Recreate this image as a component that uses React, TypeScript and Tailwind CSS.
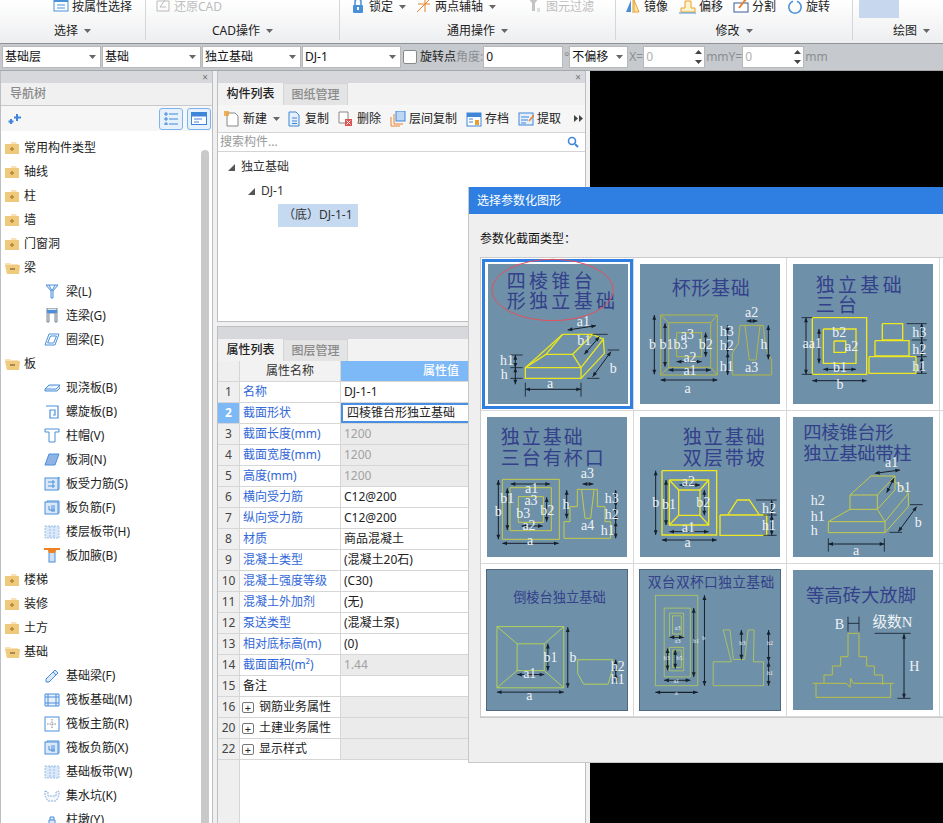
import type { ReactNode } from "react";

const Caret = ({ className = "" }: { className?: string }) => (
  <svg width="7" height="4" viewBox="0 0 7 4" className={`shrink-0 ${className}`}>
    <path d="M0 0h7L3.5 4z" fill="#666" />
  </svg>
);

/* ---------- ribbon ---------- */

const RIBBON_ICONS: Record<string, ReactNode> = {
  attr: (
    <>
      <rect x="1" y="-4" width="14" height="15" fill="#fff" stroke="#4a90d9" />
      <rect x="1" y="-4" width="14" height="6" fill="#4a90d9" />
      <path d="M4 5h8M4 8h8" stroke="#4a90d9" />
    </>
  ),
  cad: (
    <>
      <path d="M2 1h12v10H2z" fill="none" stroke="#bbb" />
      <path d="M5 7l5-7M5 7h6" stroke="#bbb" fill="none" />
    </>
  ),
  lock: (
    <>
      <path d="M5 5V2a3 3 0 016 0v3" fill="none" stroke="#4a90d9" strokeWidth="1.5" />
      <rect x="3" y="5" width="10" height="8" rx="1" fill="#4a90d9" />
      <rect x="7" y="7" width="2" height="3" fill="#fff" />
    </>
  ),
  axis: <path d="M1 12L13 0M2 4h12M9 0v12" stroke="#e8822c" fill="none" />,
  filter: (
    <>
      <path d="M1-2h11L8 3v8H5V3z" fill="#c4c4c4" />
      <path d="M10 9h3M10 11h3" stroke="#c4c4c4" />
    </>
  ),
  mirror: (
    <>
      <path d="M1 12L6 0v12z" fill="#4a90d9" />
      <path d="M8-1v14" stroke="#e8a030" />
      <path d="M9 0l5 12H9z" fill="#ffe9a8" stroke="#e8a030" />
    </>
  ),
  offset: (
    <>
      <path d="M1 12V8h4V1h6v7h4v4z" fill="#fff3cc" stroke="#e8a030" />
      <path d="M-1 13h17" stroke="#4a90d9" />
    </>
  ),
  split: (
    <>
      <rect x="1" y="3" width="14" height="9" fill="#fff" stroke="#3a5a9a" />
      <path d="M13-1L6 8" stroke="#e8822c" strokeWidth="2" />
    </>
  ),
  rotate: <path d="M10 1.2A6.2 6.2 0 116 1.2" fill="none" stroke="#4a90d9" strokeWidth="1.6" />,
};

const RibbonIcon = ({ name }: { name: string }) => (
  <svg width="16" height="13" viewBox="0 0 16 13" className="shrink-0 overflow-visible">
    {RIBBON_ICONS[name]}
  </svg>
);

function RibbonItem({ icon, text, caret, muted, className = "" }: { icon: string; text: string; caret?: boolean; muted?: boolean; className?: string }) {
  return (
    <div className={`flex items-center gap-[3px] ${muted ? "text-[#bdbdbd]" : "text-[#222]"} ${className}`}>
      <RibbonIcon name={icon} />
      <span>{text}</span>
      {caret && <Caret className="ml-[3px]" />}
    </div>
  );
}

function RibbonGroup({ width, label, pad, children }: { width: string; label: string; pad: string; children?: ReactNode }) {
  return (
    <div className={`flex h-[40px] shrink-0 flex-col border-r border-r-[#d4d6d8] ${width}`}>
      <div className={`flex h-[13px] items-center overflow-visible ${pad}`}>{children}</div>
      <div className="mt-[10px] flex h-[16px] items-center justify-center gap-[6px] text-[#222]">
        <span>{label}</span>
        <Caret />
      </div>
    </div>
  );
}

function Ribbon() {
  return (
    <div className="flex h-[43px] shrink-0 overflow-hidden bg-gradient-to-b from-white to-[#edeef0]">
      <RibbonGroup width="w-[146px]" label="选择" pad="pl-[53px]">
        <RibbonItem icon="attr" text="按属性选择" />
      </RibbonGroup>
      <RibbonGroup width="w-[194px]" label="CAD操作" pad="pl-[9px]">
        <RibbonItem icon="cad" text="还原CAD" muted />
      </RibbonGroup>
      <RibbonGroup width="w-[276px]" label="通用操作" pad="pl-[10px]">
        <RibbonItem icon="lock" text="锁定" caret />
        <RibbonItem icon="axis" text="两点辅轴" caret className="ml-[10px]" />
        <RibbonItem icon="filter" text="图元过滤" muted className="ml-[31px]" />
      </RibbonGroup>
      <RibbonGroup width="w-[237px]" label="修改" pad="pl-[9px]">
        <RibbonItem icon="mirror" text="镜像" />
        <RibbonItem icon="offset" text="偏移" className="ml-[12px]" />
        <RibbonItem icon="split" text="分割" className="ml-[10px]" />
        <RibbonItem icon="rotate" text="旋转" className="ml-[11px]" />
      </RibbonGroup>
      <div className="flex h-[40px] flex-1 flex-col">
        <div className="ml-[6px] h-[18px] w-[40px] bg-[#c6d7ee]" />
        <div className="mt-[5px] flex h-[16px] items-center gap-[6px] pl-[40px] text-[#222]">
          <span>绘图</span>
          <Caret />
        </div>
      </div>
    </div>
  );
}

/* ---------- selector bar ---------- */

function Select({ text, width }: { text: string; width: string }) {
  return (
    <div className={`flex h-[22px] shrink-0 items-center justify-between border border-[#b8b8b8] bg-white pl-[2px] pr-[4px] text-[#111] ${width}`}>
      <span>{text}</span>
      <Caret />
    </div>
  );
}

function Spin({ width }: { width: string }) {
  return (
    <div className={`flex h-[22px] shrink-0 items-center justify-between border border-[#b8b8b8] bg-white pl-[2px] pr-[2px] text-[#b0b0b0] ${width}`}>
      <span>0</span>
      <svg width="7" height="14" viewBox="0 0 7 14">
        <path d="M0 4l3.5-4L7 4zM0 10l3.5 4L7 10z" fill="#444" />
      </svg>
    </div>
  );
}

function SelectorBar() {
  return (
    <div className="flex h-[28px] shrink-0 items-center border-t border-b border-t-[#8f9296] border-b-[#a7a9ac] bg-[#c6c9cd] pl-[2px]">
      <Select text="基础层" width="w-[99px]" />
      <Select text="基础" width="w-[99px] ml-[1px]" />
      <Select text="独立基础" width="w-[99px] ml-[1px]" />
      <Select text="DJ-1" width="w-[99px] ml-[1px]" />
      <span className="ml-[2px] h-[14px] w-[14px] rounded-[2px] border border-[#8a8a8a] bg-white" />
      <span className="ml-[3px] text-[#222]">旋转点</span>
      <span className="text-[#8b8e92]">角度:</span>
      <div className="flex h-[22px] w-[80px] shrink-0 items-center border border-[#b8b8b8] bg-white pl-[2px] text-[#111]">0</div>
      <span className="ml-[1px] w-[5px] text-[#8b8e92]">°</span>
      <Select text="不偏移" width="w-[59px]" />
      <span className="ml-[1px] text-[#8b8e92]">X=</span>
      <Spin width="w-[62px]" />
      <span className="ml-[1px] text-[#8b8e92]">mmY=</span>
      <Spin width="w-[62px]" />
      <span className="ml-[1px] text-[#8b8e92]">mm</span>
    </div>
  );
}

/* ---------- nav tree ---------- */

const Folder = ({ open }: { open?: boolean }) =>
  open ? (
    <svg width="17" height="12" viewBox="0 0 17 12" className="shrink-0">
      <path d="M0 3V1h5l1 1h7v2z" fill="#f6e2b6" />
      <path d="M0 3h15l-1 9H2z" fill="#f0cb7e" />
      <path d="M5 7h5" stroke="#a88a50" strokeWidth="2" />
    </svg>
  ) : (
    <svg width="14" height="12" viewBox="0 0 14 12" className="shrink-0">
      <path d="M6 0h5l1 2H6z" fill="#f6e2b6" />
      <rect y="2" width="14" height="10" fill="#efc97c" />
      <path d="M5 7h4M7 5v4" stroke="#b8893a" strokeWidth="1.6" />
    </svg>
  );

const B = "#4a8fdc";
const TREE_ICONS: Record<string, ReactNode> = {
  beam: <path d="M2 1h12l-5 6v7H7V7zM5 1l3 6 3-6" fill="#e4eefa" stroke={B} />,
  link: (
    <>
      <path d="M3 0h10v14h-2V5H5v9H3z" fill="#dde3ea" stroke="#7b8694" />
      <rect x="3" y="2" width="10" height="3" fill={B} />
    </>
  ),
  ring: <path d="M5 2h10l-4 11H1zM6.5 4h6l-2.8 7H3.6z" fill="none" stroke={B} />,
  slab: <path d="M1 9l4-4h11v3l-3 3H1zM1 9h11l4-4" fill="#dbe8f8" stroke={B} />,
  spiral: <path d="M2 2h12v12H6V6h5v5H9" fill="none" stroke={B} strokeWidth="1.2" />,
  cap: <path d="M1 1h14v3h-4v10H5V4H1z" fill="#fff" stroke={B} />,
  hole: <path d="M5 2h10l-4 11H1z" fill="#8fb4e4" stroke={B} />,
  rebar: (
    <>
      <rect x="1" y="2" width="13" height="12" fill="#dbe8f8" stroke={B} />
      <path d="M14 2l1-1v12l-1 1M4 6h7M4 10h7M9 4v8" fill="none" stroke={B} />
    </>
  ),
  neg: (
    <>
      <rect x="1" y="2" width="13" height="12" fill="#dbe8f8" stroke={B} />
      <path d="M3 2V1h12v12h-1M5 6v4h6M8 5v7M10 5v7" fill="none" stroke={B} />
    </>
  ),
  strip: <path d="M1 2h14v12H1zM6 2v12M10 2v12" fill="#dbe8f8" stroke="#9cc0ea" strokeDasharray="2 1" />,
  haunch: (
    <>
      <rect x="5" y="2" width="6" height="12" fill="#cfe0f6" stroke={B} />
      <path d="M0 0h16v2h-4l-1 3H5L4 2H0z" fill="#f08020" />
    </>
  ),
  pencil: <path d="M2 11L11 2l3 3-9 9H2zM9 4l3 3" fill="#dbe8f8" stroke={B} />,
  raft: <path d="M1 2h14v12H1zM4 2v12M12 2v12M1 5h14M1 11h14" fill="#e8f0fa" stroke={B} />,
  main: (
    <>
      <rect x="1" y="1" width="14" height="14" fill="#fff" stroke={B} />
      <path d="M8 3v10M3 8h10" stroke="#888" strokeDasharray="1.5 1" />
    </>
  ),
  pit: <path d="M1 3l3 1v4h8V4l3-1v5l-3 5H4L1 8z" fill="#f4f7fb" stroke="#8aaedc" strokeDasharray="2 1" />,
  pier: <path d="M1 12h14v4H1zM5 12V8h6v4M6 8V5h4v3" fill="#dbe8f8" stroke={B} />,
};

const TREE: [string, string | null][] = [
  ["常用构件类型", null], ["轴线", null], ["柱", null], ["墙", null], ["门窗洞", null], ["梁", "open"],
  ["梁(L)", "beam"], ["连梁(G)", "link"], ["圈梁(E)", "ring"], ["板", "open"],
  ["现浇板(B)", "slab"], ["螺旋板(B)", "spiral"], ["柱帽(V)", "cap"], ["板洞(N)", "hole"],
  ["板受力筋(S)", "rebar"], ["板负筋(F)", "neg"], ["楼层板带(H)", "strip"], ["板加腋(B)", "haunch"],
  ["楼梯", null], ["装修", null], ["土方", null], ["基础", "open"],
  ["基础梁(F)", "pencil"], ["筏板基础(M)", "raft"], ["筏板主筋(R)", "main"], ["筏板负筋(X)", "neg"],
  ["基础板带(W)", "strip"], ["集水坑(K)", "pit"], ["柱墩(Y)", "pier"],
];

function NavTree() {
  return (
    <div className="flex w-[213px] shrink-0 flex-col overflow-hidden border-x border-x-[#bcbec2] bg-white">
      <div className="flex h-[12px] shrink-0 items-center justify-end bg-[#d6d8dc] pr-[4px] text-[10px] leading-none text-[#777]">×</div>
      <div className="flex h-[23px] shrink-0 items-center border-b border-b-[#c6c8cc] bg-[#f0f0f0] pl-[9px] font-medium text-[#8a8a8a]">导航树</div>
      <div className="flex h-[25px] shrink-0 items-center bg-[#f6f6f6] pl-[7px] pr-[1px]">
        <svg width="14" height="12" viewBox="0 0 14 12">
          <path d="M9 1v7M6 4.500h7M3 6v5M.5 8.500h5" stroke="#3f86d8" strokeWidth="2" />
        </svg>
        <div className="ml-auto flex gap-[4px]">
          <span className="flex h-[22px] w-[24px] items-center justify-center rounded-[3px] border border-[#7db4ee] bg-[#e6f1fc]">
            <svg width="14" height="13" viewBox="0 0 14 13">
              <path d="M1 1h2v2H1zM1 6h2v2H1zM1 11h2v2H1zM5 2h9M5 7h9M5 12h9" stroke="#3f86d8" fill="none" />
            </svg>
          </span>
          <span className="flex h-[22px] w-[24px] items-center justify-center rounded-[3px] border border-[#7db4ee] bg-[#e6f1fc]">
            <svg width="16" height="13" viewBox="0 0 16 13">
              <rect x=".5" y=".5" width="15" height="12" fill="#fff" stroke="#3f86d8" />
              <rect x=".5" y=".5" width="15" height="4" fill="#3f86d8" />
              <path d="M3 7h8M3 10h5" stroke="#3f86d8" />
            </svg>
          </span>
        </div>
      </div>
      <div className="flex min-h-0 flex-1">
        <div className="min-w-0 flex-1 overflow-hidden pt-[5px]">
          {TREE.map(([label, kind]) => {
            const isGroup = kind === null || kind === "open";
            return (
              <div key={label} className={`flex h-[24px] items-center text-[#222] ${isGroup ? "pl-[3px]" : "pl-[43px]"}`}>
                {isGroup ? (
                  <span className="flex w-[20px] items-center pl-[1px]">
                    <Folder open={kind === "open"} />
                  </span>
                ) : (
                  <svg width="16" height="16" viewBox="0 0 16 16" className="mr-[6px] shrink-0">
                    {TREE_ICONS[kind as string]}
                  </svg>
                )}
                {label}
              </div>
            );
          })}
        </div>
        <div className="mr-[3px] mt-[19px] w-[8px] shrink-0 rounded-t-[4px] bg-[#c9c9c9]" />
      </div>
    </div>
  );
}

/* ---------- component list + property table ---------- */

function PaneTabs({ active, other }: { active: string; other: string }) {
  return (
    <div className="flex h-[22px] shrink-0 bg-[#f2f2f2]">
      <div className="flex w-[65px] items-center justify-center font-medium text-[#222]">{active}</div>
      <div className="flex w-[65px] items-center justify-center border-x border-t border-[#d4d4d4] bg-[#e4e4e4] font-medium text-[#8a8a8a]">{other}</div>
    </div>
  );
}

const TOOL_ICONS: Record<string, ReactNode> = {
  new: (
    <>
      <path d="M3 2h8l3 3v10H3z" fill="#fff" stroke="#888" />
      <path d="M0 0h5v5H0z" fill="#f0a030" opacity=".8" />
    </>
  ),
  copy: <path d="M3 1h7l3 3v11H3zM6 7h5M6 10h5M6 12.500h5" fill="#e6f0fb" stroke="#3f86d8" />,
  del: (
    <>
      <path d="M1 1h9v11H1z" fill="#fff" stroke="#888" />
      <rect x="7" y="8" width="7" height="7" fill="#e05050" />
      <path d="M8.500 9.500l4 4m0-4l-4 4" stroke="#fff" />
    </>
  ),
  floor: (
    <>
      <rect x="6" y="0" width="9" height="10" fill="#bcd6f4" stroke="#3f86d8" />
      <path d="M4 3v10h9M1 6v9h9" fill="none" stroke="#e8822c" />
    </>
  ),
  save: (
    <>
      <rect x="1" y="2" width="14" height="13" fill="#fff" stroke="#3f86d8" />
      <rect x="1" y="2" width="14" height="4" fill="#3f86d8" />
      <rect x="9" y="9" width="4" height="5" fill="#e8a030" />
      <path d="M3 8h4M3 11h4" stroke="#3f86d8" />
    </>
  ),
  extract: (
    <>
      <rect x="1" y="2" width="14" height="12" fill="#e6f0fb" stroke="#3f86d8" />
      <path d="M3 6h8M3 9h7M3 12h5" stroke="#3f86d8" />
      <path d="M11 10l5-6" stroke="#e8822c" strokeWidth="1.500" />
    </>
  ),
};

function Tool({ icon, text, caret, className = "" }: { icon: string; text: string; caret?: boolean; className?: string }) {
  return (
    <div className={`flex shrink-0 items-center gap-[3px] text-[#222] ${className}`}>
      <svg width="16" height="16" viewBox="0 0 16 16" className="shrink-0">{TOOL_ICONS[icon]}</svg>
      <span>{text}</span>
      {caret && <Caret className="ml-[3px]" />}
    </div>
  );
}

function ComponentList() {
  return (
    <div className="flex h-[251px] shrink-0 flex-col border-x border-b border-[#bcbec2] bg-white">
      <div className="flex h-[12px] shrink-0 items-center justify-end bg-[#d6d8dc] pr-[4px] text-[10px] leading-none text-[#777]">×</div>
      <PaneTabs active="构件列表" other="图纸管理" />
      <div className="flex h-[27px] shrink-0 items-center bg-[#f6f6f6] pl-[6px]">
        <Tool icon="new" text="新建" caret />
        <Tool icon="copy" text="复制" className="ml-[6px]" />
        <Tool icon="del" text="删除" className="ml-[9px]" />
        <Tool icon="floor" text="层间复制" className="ml-[9px]" />
        <Tool icon="save" text="存档" className="ml-[9px]" />
        <Tool icon="extract" text="提取" className="ml-[9px]" />
        <span className="ml-[13px] flex items-center">
          <svg width="9" height="7" viewBox="0 0 9 7"><path d="M0 0l4 3.500L0 7zM5 0l4 3.500L5 7z" fill="#444" /></svg>
        </span>
      </div>
      <div className="flex h-[20px] shrink-0 items-center justify-between border-y border-y-[#d4d4d4] pl-[2px] pr-[6px] text-[#999]">
        <span>搜索构件...</span>
        <svg width="12" height="12" viewBox="0 0 12 12">
          <circle cx="5" cy="5" r="3.500" fill="none" stroke="#3f86d8" strokeWidth="1.600" />
          <path d="M8 8l3 3" stroke="#3f86d8" strokeWidth="2" />
        </svg>
      </div>
      <div className="flex-1 pt-[3px] text-[#333]">
        <div className="flex h-[24px] items-center pl-[10px]">
          <svg width="7" height="7" viewBox="0 0 7 7" className="mr-[6px]"><path d="M7 0v7H0z" fill="#555" /></svg>
          独立基础
        </div>
        <div className="flex h-[24px] items-center pl-[30px]">
          <svg width="7" height="7" viewBox="0 0 7 7" className="mr-[6px]"><path d="M7 0v7H0z" fill="#555" /></svg>
          DJ-1
        </div>
        <div className="flex h-[24px] items-center pl-[60px]">
          <span className="flex h-[23px] items-center bg-[#c5d9f1] px-[5px]">（底）DJ-1-1</span>
        </div>
      </div>
    </div>
  );
}

type Row = { n: number; name: string; value?: string; kind?: "grey" | "plain" | "group" | "active" };

const ROWS: Row[] = [
  { n: 1, name: "名称", value: "DJ-1-1" },
  { n: 2, name: "截面形状", value: "四棱锥台形独立基础", kind: "active" },
  { n: 3, name: "截面长度(mm)", value: "1200", kind: "grey" },
  { n: 4, name: "截面宽度(mm)", value: "1200", kind: "grey" },
  { n: 5, name: "高度(mm)", value: "1200", kind: "grey" },
  { n: 6, name: "横向受力筋", value: "C12@200" },
  { n: 7, name: "纵向受力筋", value: "C12@200" },
  { n: 8, name: "材质", value: "商品混凝土" },
  { n: 9, name: "混凝土类型", value: "(混凝土20石)" },
  { n: 10, name: "混凝土强度等级", value: "(C30)" },
  { n: 11, name: "混凝土外加剂", value: "(无)" },
  { n: 12, name: "泵送类型", value: "(混凝土泵)" },
  { n: 13, name: "相对底标高(m)", value: "(0)" },
  { n: 14, name: "截面面积(m²)", value: "1.44", kind: "grey" },
  { n: 15, name: "备注", kind: "plain" },
  { n: 16, name: "钢筋业务属性", kind: "group" },
  { n: 20, name: "土建业务属性", kind: "group" },
  { n: 22, name: "显示样式", kind: "group" },
];

function PropertyRow({ row }: { row: Row }) {
  const { n, name, value, kind } = row;
  const greyValue = kind === "grey" || kind === "group";
  return (
    <div className="flex h-[21px] border-b border-b-[#d6d6d6]">
      <div className={`flex w-[22px] shrink-0 items-center justify-center border-r border-r-[#d6d6d6] ${kind === "active" ? "bg-[#7db8f7] font-bold text-white" : "bg-[#efefef] text-[#444]"}`}>{n}</div>
      <div className={`flex w-[101px] shrink-0 items-center border-r border-r-[#d6d6d6] ${kind === "group" ? "pl-[2px] text-[#222]" : kind === "plain" ? "pl-[3px] text-[#222]" : "pl-[3px] text-[#3167d8]"}`}>
        {kind === "group" && (
          <span className="mr-[5px] flex h-[11px] w-[12px] items-center justify-center rounded-[2px] border border-[#777] text-[11px] leading-none">+</span>
        )}
        {name}
      </div>
      <div className={`flex min-w-0 flex-1 items-center ${greyValue ? "bg-[#ebebeb]" : "bg-white"} ${kind === "active" ? "border-y-2 border-l-2 border-[#4a90e2] pl-[4px]" : "pl-[3px]"} ${kind === "grey" ? "text-[#a2a2a2]" : "text-[#222]"}`}>
        {value}
      </div>
    </div>
  );
}

function PropertyList() {
  return (
    <div className="mt-[4px] flex min-h-0 flex-1 flex-col border-x border-t border-[#bcbec2] bg-white">
      <div className="h-[12px] shrink-0 bg-[#d6d8dc]" />
      <PaneTabs active="属性列表" other="图层管理" />
      <div className="flex h-[21px] shrink-0 border-b border-b-[#d6d6d6]">
        <div className="w-[22px] shrink-0 border-r border-r-[#d6d6d6] bg-[#efefef]" />
        <div className="flex w-[101px] shrink-0 items-center justify-center border-r border-r-[#d6d6d6] bg-[#f2f2f2] text-[#333]">属性名称</div>
        <div className="flex flex-1 items-center bg-[#7db8f7] pl-[82px] font-medium text-white">属性值</div>
      </div>
      {ROWS.map((row) => (
        <PropertyRow key={row.n} row={row} />
      ))}
      <div className="w-[22px] flex-1 border-r border-r-[#d6d6d6] bg-[#efefef]" />
    </div>
  );
}

/* ---------- parametric shape pictures (drawn in 3x coordinates of the 140px tile) ---------- */

type Diagram = {
  box: string;
  color: string;
  sw: number;
  framed?: boolean;
  titles: [string, number, number][];
  titleSize: number;
  spacing: number;
  polys: string[];
  dims: number[][];
  ticks?: number[][];
  labels: [string, number, number, number?][];
  extra?: ReactNode;
};

function Dim({ d, size = 14 }: { d: number[]; size?: number }) {
  const [x1, y1, x2, y2] = d;
  const len = Math.hypot(x2 - x1, y2 - y1) || 1;
  const ux = (x2 - x1) / len;
  const uy = (y2 - y1) / len;
  const hx = -uy * (size / 2.4);
  const hy = ux * (size / 2.4);
  return (
    <g>
      <line x1={x1} y1={y1} x2={x2} y2={y2} stroke="#16202c" strokeWidth="3" />
      <polygon fill="#16202c" points={`${x1},${y1} ${x1 + ux * size + hx},${y1 + uy * size + hy} ${x1 + ux * size - hx},${y1 + uy * size - hy}`} />
      <polygon fill="#16202c" points={`${x2},${y2} ${x2 - ux * size + hx},${y2 - uy * size + hy} ${x2 - ux * size - hx},${y2 - uy * size - hy}`} />
    </g>
  );
}

const DIAGRAMS: Diagram[] = [
  {
    box: "51 252 420 420", color: "#e8e620", sw: 4, titleSize: 57, spacing: 10,
    titles: [["四棱锥台", 107, 325], ["形独立基础", 107, 385]],
    polys: [
      "163,563 330,563 330,595 163,595 163,563",
      "275,463 365,463 305,523 225,523 275,463",
      "163,563 225,523", "163,563 275,463", "330,563 305,523",
      "330,595 400,520 397,478 330,563", "365,463 397,478",
    ],
    dims: [[163, 628, 330, 628], [133, 525, 133, 563], [133, 563, 133, 613], [290, 450, 375, 437], [385, 470, 340, 523], [420, 515, 365, 590]],
    ticks: [[163, 608, 163, 650], [330, 608, 330, 650], [118, 525, 155, 525], [118, 563, 155, 563], [118, 595, 155, 595], [365, 463, 410, 463], [410, 510, 445, 510], [348, 595, 385, 595]],
    labels: [["a", 237, 610], ["h1", 108, 540], ["h", 100, 582], ["a1", 337, 423], ["b1", 340, 482], ["b", 427, 565]],
    extra: <ellipse cx="245" cy="330" rx="182" ry="92" fill="none" stroke="#e6505a" strokeWidth="3" />,
  },
  {
    box: "510 252 420 420", color: "#b4b845", sw: 3, titleSize: 57, spacing: 2,
    titles: [["杯形基础", 605, 345]],
    polys: [
      "572,405 742,405 742,585 572,585 572,405", "596,428 722,428 722,562 596,562 596,428",
      "620,458 695,458 695,530 620,530 620,458", "572,405 596,428", "742,405 722,428", "572,585 596,562", "742,585 722,562",
      "810,436 880,436 887,505 905,540 905,585 787,585 787,520 805,490 810,436", "825,438 838,540 858,540 870,438",
    ],
    dims: [[553, 405, 553, 583], [585, 430, 585, 560], [707, 458, 707, 530], [620, 545, 695, 545], [596, 570, 722, 570], [572, 600, 742, 600], [773, 436, 773, 518], [773, 518, 773, 585], [895, 436, 895, 538], [830, 423, 862, 423]],
    labels: [["b b1b3", 595, 492], ["a3", 652, 462], ["b2", 707, 492], ["a2", 660, 532], ["a1", 660, 572], ["a", 653, 625], ["a2", 845, 398], ["h3", 770, 455], ["h2", 770, 497], ["h1", 770, 558], ["h", 882, 492], ["a3", 845, 562]],
  },
  {
    box: "969 252 420 420", color: "#efe820", sw: 4, titleSize: 57, spacing: 10,
    titles: [["独立基础", 1037, 335], ["三台", 1037, 395]],
    polys: [
      "1027,413 1190,413 1190,583 1027,583 1027,413", "1060,447 1158,447 1158,550 1060,550 1060,447", "1092,483 1127,483 1127,517 1092,517 1092,483",
      "1197,530 1338,530 1338,580 1197,580 1197,530", "1215,482 1317,482 1317,528 1215,528 1215,482", "1237,431 1298,431 1298,480 1237,480 1237,431",
    ],
    dims: [[1008, 413, 1008, 583], [1047, 447, 1047, 550], [1060, 568, 1158, 568], [1027, 602, 1190, 602], [1355, 430, 1355, 480], [1355, 480, 1355, 530], [1355, 530, 1355, 580]],
    ticks: [[995, 413, 1027, 413], [995, 583, 1027, 583], [1310, 431, 1370, 431], [1325, 480, 1370, 480], [1340, 530, 1370, 530], [1340, 580, 1370, 580]],
    labels: [["aa1", 1027, 490], ["b2", 1108, 458], ["a2", 1145, 498], ["b1", 1110, 562], ["b", 1110, 612], ["h3", 1348, 458], ["h2", 1348, 508], ["h1", 1348, 560]],
  },
  {
    box: "51 21 420 420", color: "#c4cc48", sw: 3, titleSize: 57, spacing: 6,
    titles: [["独立基础", 92, 102], ["三台有杯口", 92, 165]],
    polys: [
      "97,208 268,208 268,388 97,388 97,208", "120,233 244,233 244,362 120,362 120,233", "145,260 220,260 220,337 145,337 145,260",
      "322,238 382,238 382,290 405,290 405,335 422,335 422,385 282,385 282,335 300,335 300,290 322,290 322,238", "335,240 345,325 362,325 372,240",
    ],
    dims: [[85, 210, 85, 388], [112, 235, 112, 360], [230, 262, 230, 335], [122, 222, 240, 222], [155, 348, 218, 348], [97, 400, 266, 400], [290, 240, 290, 325], [338, 222, 370, 222], [437, 240, 437, 290], [437, 290, 437, 335], [437, 335, 437, 385]],
    labels: [["a1", 185, 235], ["b1", 112, 265], ["a3", 183, 272], ["b3", 160, 309], ["b2", 232, 302], ["a2", 177, 345], ["b", 85, 303], ["a", 180, 390], ["a3", 352, 190], ["h", 288, 284], ["h3", 425, 265], ["h2", 425, 312], ["h1", 413, 362], ["a4", 353, 345]],
  },
  {
    box: "510 21 420 420", color: "#efe820", sw: 4, titleSize: 57, spacing: 6,
    titles: [["独立基础", 638, 102], ["双层带坡", 638, 165]],
    polys: [
      "576,182 740,182 740,375 576,375 576,182", "598,210 716,210 716,345 598,345 598,210", "626,240 690,240 690,316 626,316 626,240",
      "598,210 626,240", "716,210 690,240", "598,345 626,316", "716,345 690,316",
      "750,315 890,315 890,376 750,376 750,315", "773,315 802,270 838,270 868,315",
    ],
    dims: [[557, 182, 557, 375], [588, 210, 588, 345], [703, 240, 703, 316], [628, 225, 690, 225], [598, 365, 716, 365], [576, 390, 740, 390], [905, 270, 905, 315], [905, 315, 905, 376]],
    ticks: [[858, 270, 920, 270], [880, 315, 920, 315], [880, 376, 920, 376]],
    labels: [["a2", 655, 215], ["b", 557, 277], ["b1", 597, 284], ["b2", 700, 277], ["a1", 655, 352], ["a", 653, 397], ["h2", 897, 295], ["h1", 897, 346]],
  },
  {
    box: "969 21 420 420", color: "#c4cc48", sw: 3, titleSize: 55, spacing: -1,
    titles: [["四棱锥台形", 1000, 88], ["独立基础带柱", 1000, 150]],
    polys: [
      "1075,335 1245,335 1245,368 1075,368 1075,335", "1140,255 1222,255 1222,298 1140,298 1140,255",
      "1140,255 1203,198 1275,198 1222,255", "1275,198 1275,240 1222,298", "1245,335 1315,250 1315,290 1245,368", "1222,298 1245,335", "1140,298 1075,335", "1275,215 1315,250",
    ],
    dims: [[1215, 190, 1290, 180], [1272, 205, 1250, 248], [1340, 290, 1285, 365], [1075, 402, 1243, 402]],
    ticks: [[1075, 385, 1075, 425], [1243, 385, 1243, 425], [1320, 284, 1358, 284], [1258, 367, 1296, 367]],
    labels: [["a1", 1265, 158], ["b1", 1302, 232], ["h2", 1043, 272], ["h1", 1043, 319], ["h", 1033, 362], ["b", 1345, 337], ["a", 1158, 422]],
  },
  {
    box: "48 477 423 423", color: "#bfdf48", sw: 2.500, framed: true, titleSize: 40, spacing: 0,
    titles: [["倒棱台独立基础", 127, 575]],
    polys: [
      "78,648 280,648 280,833 78,833 78,648", "139,700 221,700 221,781 139,781 139,700", "78,648 139,700", "280,648 221,700", "78,833 139,781", "280,833 221,781",
      "322,748 428,748 428,775 414,822 340,822 322,790 322,748",
    ],
    dims: [[292, 650, 292, 833], [232, 700, 232, 781], [139, 793, 221, 793], [78, 846, 280, 846], [437, 748, 437, 790], [437, 790, 437, 822]],
    labels: [["b1", 240, 742], ["b", 308, 742], ["a1", 177, 790], ["a", 176, 857], ["h2", 443, 770], ["h1", 443, 807]],
  },
  {
    box: "510 483 417 414", color: "#c4d848", sw: 2, framed: true, titleSize: 41, spacing: 1,
    titles: [["双台双杯口独立基础", 533, 533]],
    polys: [
      "556,557 682,557 682,826 556,826 556,557", "582,595 660,595 660,800 582,800 582,595", "598,610 640,610 640,680 598,680 598,610", "607,618 633,618 633,672 607,672 607,618",
      "598,712 640,712 640,782 598,782 598,712", "607,720 633,720 633,772 607,772 607,720",
      "728,826 728,755 782,755 758,660 778,660 788,748 822,748 832,660 850,660 848,755 878,755 878,826 728,826",
    ],
    dims: [[702, 557, 702, 826], [670, 595, 670, 800], [556, 846, 682, 846], [598, 682, 640, 682], [592, 715, 592, 780], [615, 720, 615, 775], [582, 810, 660, 810], [812, 660, 812, 748], [893, 660, 893, 755], [893, 755, 893, 826]],
    labels: [["a3", 622, 655, 18], ["a3", 622, 693, 18], ["b1", 677, 692, 18], ["b", 700, 685, 18], ["b3", 590, 745, 18], ["b5", 628, 745, 18], ["a1", 618, 813, 18], ["a", 618, 848, 18], ["h3", 815, 700, 18], ["h2", 897, 700, 18], ["h1", 897, 788, 18]],
  },
  {
    box: "969 480 420 420", color: "#b8c045", sw: 3, titleSize: 55, spacing: 0,
    titles: [["等高砖大放脚", 1008, 575]],
    polys: [
      "1038,820 1038,862 1262,862 1262,820",
      "1062,820 1062,795 1087,795 1087,768 1112,768 1112,740 1134,740 1134,670 1167,670 1167,740 1190,740 1190,768 1213,768 1213,795 1238,795 1238,825",
      "1028,820 1130,820 1140,832 1142,805 1150,820 1272,820",
    ],
    dims: [[1302, 672, 1302, 865]],
    ticks: [[1134, 620, 1134, 665], [1167, 620, 1167, 665], [1214, 670, 1322, 670], [1282, 865, 1322, 865], [1134, 640, 1167, 640]],
    labels: [["B", 1108, 642], ["级数N", 1267, 636, 44], ["H", 1333, 768]],
  },
];

function ShapeTile({ d }: { d: Diagram }) {
  return (
    <svg viewBox={d.box} className={`h-[140px] w-[140px] overflow-visible bg-[#6f90a9] ${d.framed ? "outline-1 outline-[#4f6a80]" : ""}`}>
      {d.titles.map(([text, x, y]) => (
        <text key={text} x={x} y={y} fontSize={d.titleSize} letterSpacing={d.spacing} fill="#33408a" className="font-['Noto_Sans_CJK_SC',sans-serif]">
          {text}
        </text>
      ))}
      {d.polys.map((points) => (
        <polyline key={points} points={points} fill="none" stroke={d.color} strokeWidth={d.sw} />
      ))}
      {d.ticks?.map((t) => (
        <line key={t.join()} x1={t[0]} y1={t[1]} x2={t[2]} y2={t[3]} stroke="#16202c" strokeWidth="2.500" />
      ))}
      {d.dims.map((t) => (
        <Dim key={t.join()} d={t} />
      ))}
      {d.labels.map(([text, x, y, size]) => (
        <text key={`${text}${x}`} x={x} y={y} fontSize={size ?? 42} textAnchor="middle" dominantBaseline="central" fill="#eef3f6" className="font-['Liberation_Serif','Noto_Sans_CJK_SC',serif]">
          {text}
        </text>
      ))}
      {d.extra}
    </svg>
  );
}

function ShapeDialog() {
  return (
    <div className="absolute left-[468px] top-[187px] flex h-[576px] w-[475px] flex-col border-b border-l border-[#c8c8c8] bg-[#efefef]">
      <div className="flex h-[27px] shrink-0 items-center bg-[#2e7fe1] pl-[8px] text-white">选择参数化图形</div>
      <div className="mt-[17px] h-[16px] pl-[11px] leading-[16px] text-[#111]">参数化截面类型：</div>
      <div className="ml-[11px] mt-[10px] grid h-[461px] w-[470px] grid-cols-[153px_153px_153px_1fr] border border-[#cbcbcb] bg-white">
        {DIAGRAMS.flatMap((d, i) => {
          const cell = (
            <div key={d.box} className="flex h-[153px] items-center justify-center border-b border-r border-[#d8d8d8]">
              {i === 0 ? (
                <div className="ml-[1px] flex h-[150px] w-[151px] items-center justify-center border-[3px] border-[#2e7fe1]">
                  <ShapeTile d={d} />
                </div>
              ) : (
                <ShapeTile d={d} />
              )}
            </div>
          );
          return i % 3 === 2 ? [cell, <div key={`${d.box}-rest`} className="h-[153px] border-b border-[#d8d8d8]" />] : [cell];
        })}
      </div>
    </div>
  );
}

export default function App() {
  return (
    <div className="relative flex h-[823px] w-[943px] flex-col overflow-hidden bg-[#f0f0f0] font-['Noto_Sans','Noto_Sans_CJK_SC',sans-serif] text-[12px] leading-none">
      <Ribbon />
      <SelectorBar />
      <div className="flex min-h-0 flex-1">
        <NavTree />
        <div className="ml-[4px] flex w-[369px] shrink-0 flex-col">
          <ComponentList />
          <PropertyList />
        </div>
        <div className="ml-[4px] flex-1 bg-black" />
      </div>
      <ShapeDialog />
    </div>
  );
}
